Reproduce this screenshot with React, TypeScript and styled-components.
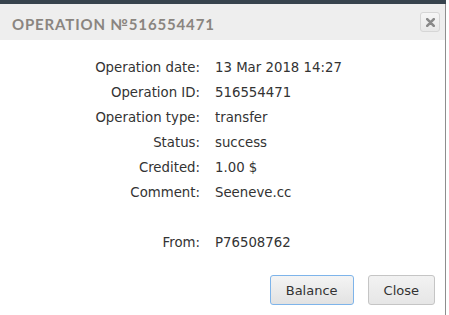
import React from "react";
import styled, { createGlobalStyle } from "styled-components";

const GlobalStyle = createGlobalStyle`
  html, body {
    margin: 0;
    padding: 0;
    background: #ffffff;
  }
  body {
    width: 449px;
    height: 315px;
    overflow: hidden;
  }
`;

interface Row {
  label: string;
  value: string;
  gapBefore?: boolean;
}

const rows: Row[] = [
  { label: "Operation date:", value: "13 Mar 2018 14:27" },
  { label: "Operation ID:", value: "516554471" },
  { label: "Operation type:", value: "transfer" },
  { label: "Status:", value: "success" },
  { label: "Credited:", value: "1.00 $" },
  { label: "Comment:", value: "Seeneve.cc" },
  { label: "From:", value: "P76508762", gapBefore: true },
];

export default function App() {
  return (
    <>
      <GlobalStyle />
      <StPage>
        <StTopBar />
        <StDialog>
          <StHeader>
            <StTitle>OPERATION №516554471</StTitle>
            <StCloseIcon aria-label="close">
              <svg width="9" height="9" viewBox="0 0 9 9">
                <path
                  d="M1.2 1.2 L7.8 7.8 M7.8 1.2 L1.2 7.8"
                  stroke="#8a8a8a"
                  strokeWidth="2.6"
                  strokeLinecap="round"
                />
              </svg>
            </StCloseIcon>
          </StHeader>
          <StBody>
            {rows.map((row) => (
              <React.Fragment key={row.label}>
                <StLabel gapBefore={row.gapBefore}>{row.label}</StLabel>
                <StValue gapBefore={row.gapBefore}>{row.value}</StValue>
              </React.Fragment>
            ))}
          </StBody>
          <StFooter>
            <StButton primary>Balance</StButton>
            <StButton>Close</StButton>
          </StFooter>
        </StDialog>
      </StPage>
    </>
  );
}

const StPage = styled.div`
  width: 449px;
  height: 315px;
  display: flex;
  flex-direction: column;
`;

const StTopBar = styled.div`
  height: 4px;
  width: 446px;
  background: #37434d;
  flex-shrink: 0;
`;

const StDialog = styled.div`
  width: 446px;
  flex: 1;
  box-sizing: border-box;
  border-right: 1px solid #8e8e8e;
  background: #ffffff;
  display: flex;
  flex-direction: column;
`;

const StHeader = styled.div`
  height: 36px;
  background: #eeeeee;
  display: flex;
  align-items: center;
  justify-content: space-between;
  padding: 0 5px 0 12px;
  box-sizing: border-box;
`;

const StTitle = styled.h1`
  margin: 0;
  padding-top: 3px;
  font-family: "Lato", sans-serif;
  font-weight: 700;
  font-size: 15px;
  letter-spacing: 0.85px;
  color: #8a8580;
`;

const StCloseIcon = styled.button`
  width: 20px;
  height: 20px;
  padding: 0;
  border: 1px solid #d6d6d6;
  border-radius: 3px;
  background: linear-gradient(#f6f6f6, #e8e8e8);
  display: flex;
  align-items: center;
  justify-content: center;
`;

const StBody = styled.div`
  display: grid;
  grid-template-columns: 200px 1fr;
  column-gap: 15px;
  row-gap: 5px;
  padding-top: 18px;
  font-family: "DejaVu Sans", sans-serif;
  font-size: 13.3px;
  color: #333333;
  line-height: 20px;
`;

const StLabel = styled.div<{ gapBefore?: boolean }>`
  text-align: right;
  ${(props) => props.gapBefore && "margin-top: 25px;"}
`;

const StValue = styled.div<{ gapBefore?: boolean }>`
  ${(props) => props.gapBefore && "margin-top: 25px;"}
`;

const StFooter = styled.div`
  margin-top: auto;
  display: flex;
  justify-content: flex-end;
  gap: 14px;
  padding: 0 10px 10px 0;
`;

const StButton = styled.button<{ primary?: boolean }>`
  height: 30px;
  padding: 0 15px;
  font-family: "DejaVu Sans", sans-serif;
  font-size: 13px;
  color: #333333;
  border-radius: 3px;
  border: 1px solid ${(props) => (props.primary ? "#7eb4ea" : "#c5c5c5")};
  background: ${(props) =>
    props.primary
      ? "linear-gradient(#f4f4f4, #e2e2e2)"
      : "linear-gradient(#f2f2f2, #e6e6e6)"};
`;
